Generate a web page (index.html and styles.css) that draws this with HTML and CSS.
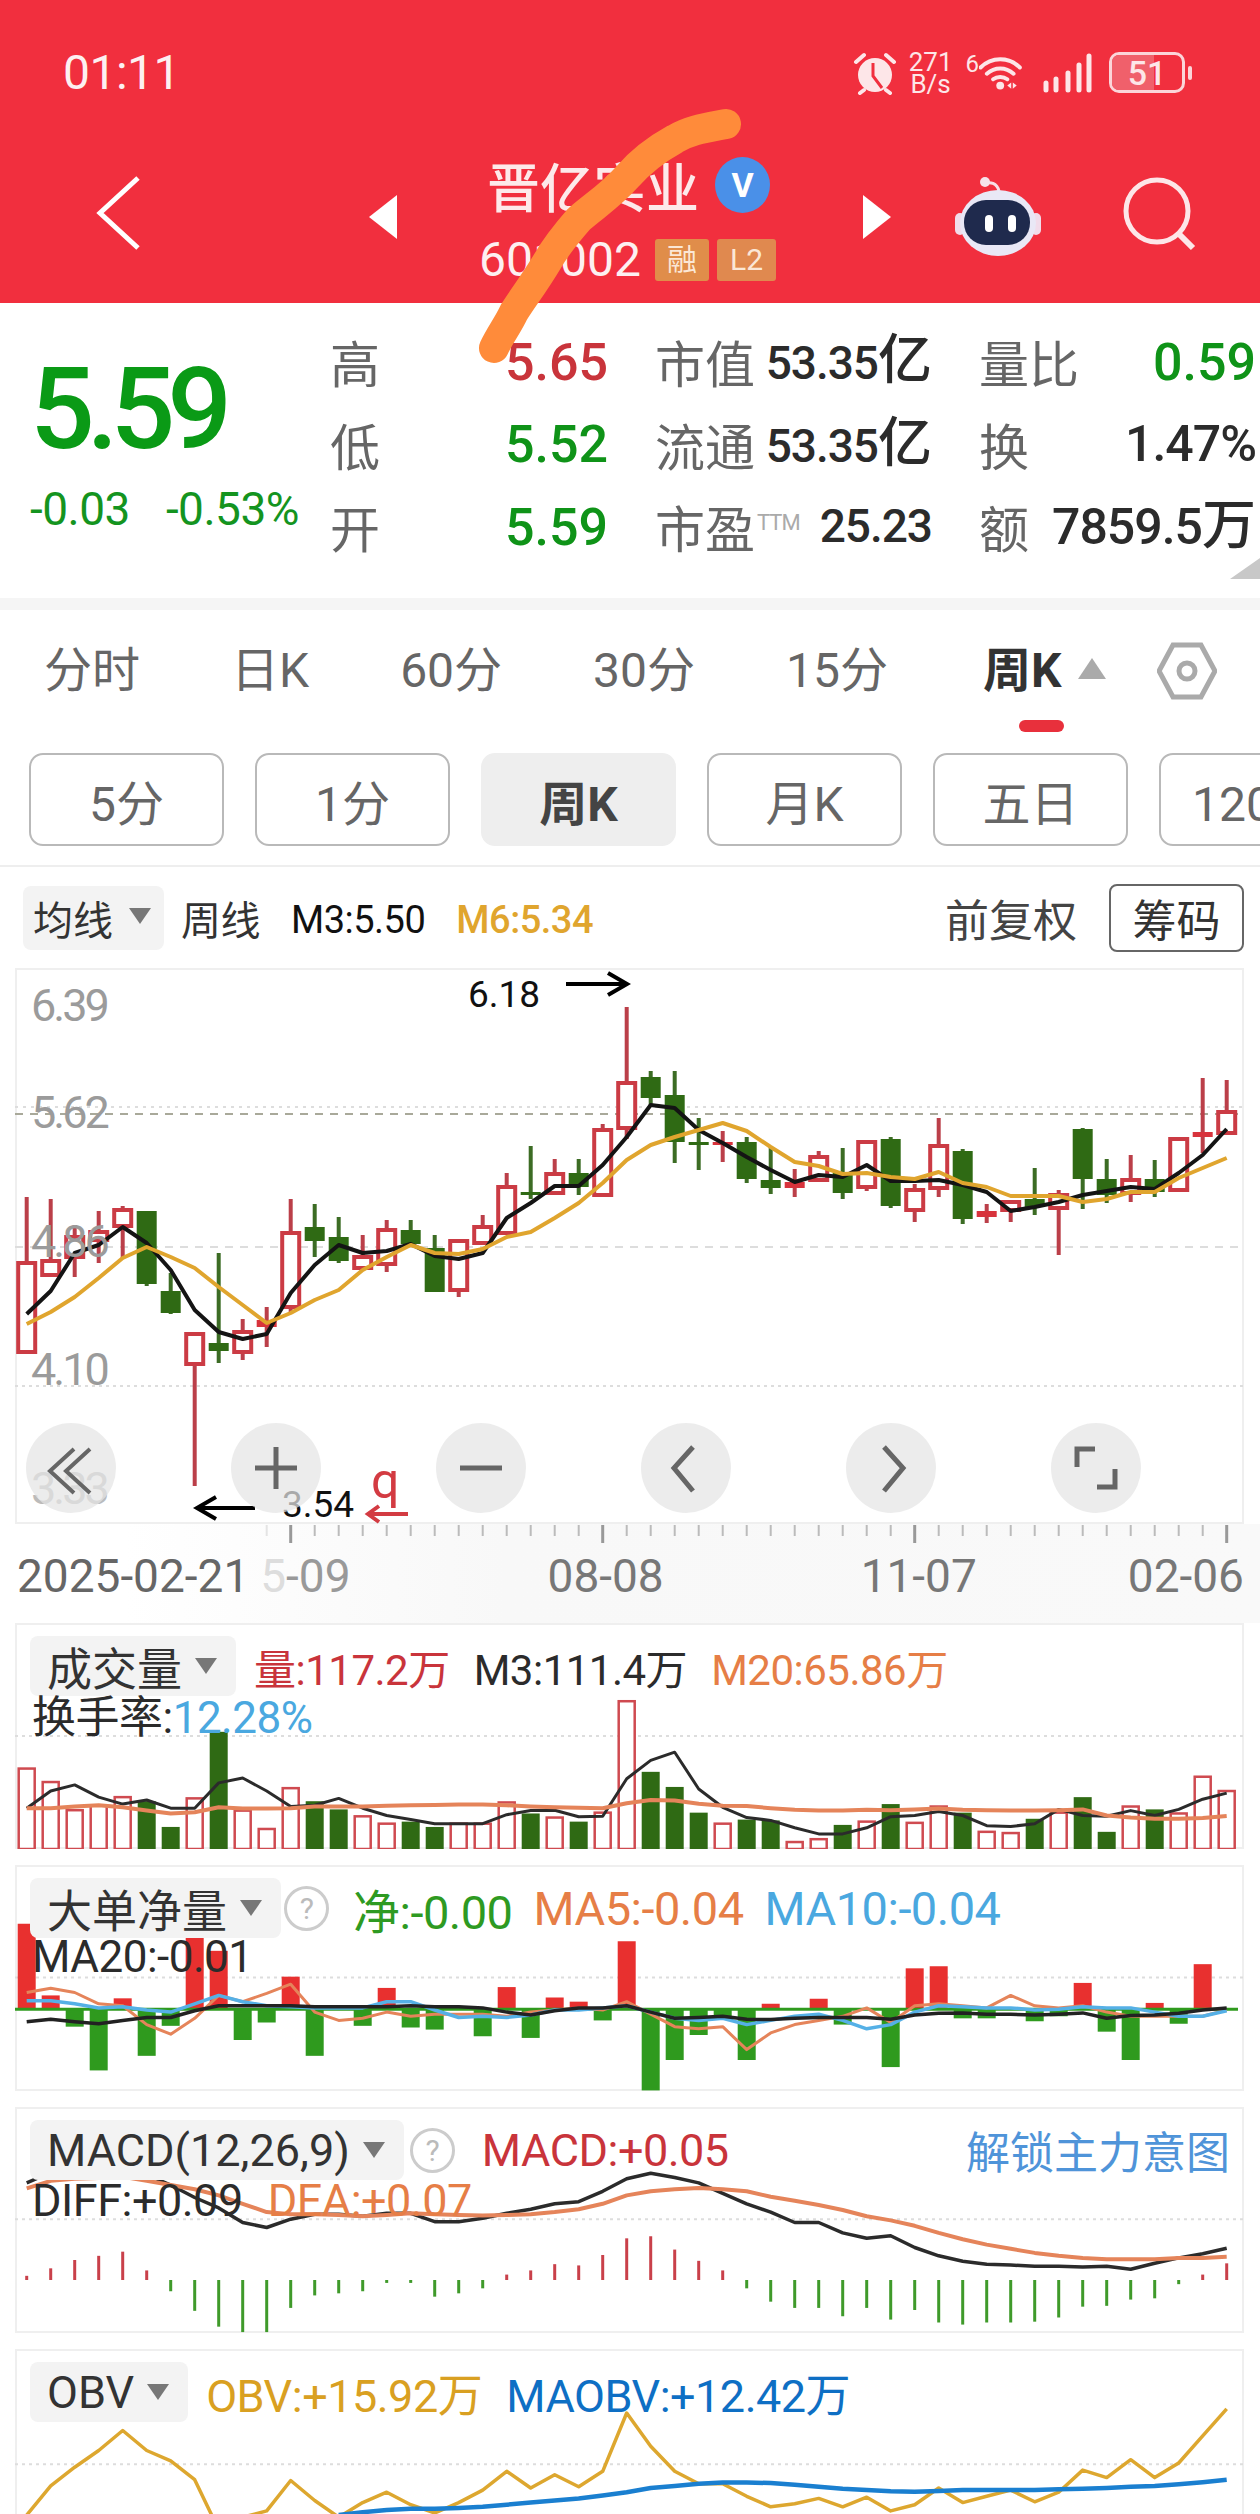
FILE: index.html
```html
<!DOCTYPE html>
<html lang="zh">
<head>
<meta charset="utf-8">
<title>晋亿实业</title>
<link rel="stylesheet" href="styles.css">
<script src="chart.js" defer></script>
</head>
<body>
<div class="page">
  <header class="top">
    <div class="status">
      <span class="clock">01:11</span>
      <div class="status-icons">
        <svg class="ic-alarm" viewBox="0 0 44 44"><path d="M3 11 11 4M41 11 33 4M11 39l-4 3M33 39l4 3" fill="none" stroke="#fde6e8" stroke-width="4" stroke-linecap="round"/><circle cx="22" cy="24" r="17" fill="#fde6e8"/><path d="M20 12v13l9 12" fill="none" stroke="#f12f3e" stroke-width="3"/></svg>
        <div class="netspeed"><span>271</span><span>B/s</span></div>
        <div class="wifi"><span class="wifi-six">6</span><svg class="ic-wifi" viewBox="0 0 56 42"><path d="M2 14C16 0 38 0 52 14M10 22c10-9 24-9 34 0M18 29c5-4 13-4 18 0" fill="none" stroke="#fde6e8" stroke-width="5" stroke-linecap="round"/><circle cx="27" cy="37" r="5" fill="#fde6e8"/><path d="M36 37l5-4v8zM43 33l5 4-5 4z" fill="#fde6e8"/></svg></div>
        <svg class="ic-signal" viewBox="0 0 50 40"><g fill="none" stroke="#fde6e8" stroke-width="5" stroke-linecap="round"><path d="M3 30v7M13 26v11M25 20v17M36 12v25M46 3v34"/></g></svg>
        <div class="battery"><span class="battery-fill"></span><span class="battery-num">51</span></div>
        <span class="battery-nub"></span>
      </div>
    </div>
    <div class="nav">
      <svg class="ic-back" viewBox="0 0 46 76"><path d="M42 3 4 38l38 35" fill="none" stroke="#fff" stroke-width="5"/></svg>
      <span class="tri tri-left"></span>
      <div class="nav-title">
        <div class="title-row"><span class="title">晋亿实业</span><span class="badge-v">V</span></div>
        <div class="code-row"><span class="code">601002</span><span class="mini">融</span><span class="mini mini-l2">L2</span></div>
      </div>
      <span class="tri tri-right"></span>
      <svg class="ic-robot" viewBox="0 0 88 80"><path d="M30 7c6-3 13-1 15 7" fill="none" stroke="#f8dfe6" stroke-width="3"/><circle cx="31" cy="5" r="5" fill="#f6e3ea"/><rect x="1" y="36" width="10" height="22" rx="5" fill="#f1dcea"/><rect x="77" y="36" width="10" height="22" rx="5" fill="#f1dcea"/><ellipse cx="44" cy="46" rx="38" ry="33" fill="#e9e8f6"/><rect x="10" y="23" width="66" height="45" rx="22" fill="#1f2a4d"/><rect x="31" y="38" width="8" height="17" rx="4" fill="#fff"/><rect x="54" y="38" width="8" height="17" rx="4" fill="#fff"/></svg>
      <svg class="ic-search" viewBox="0 0 74 74"><circle cx="34" cy="34" r="31" fill="none" stroke="#fde6e8" stroke-width="5"/><path d="M55 56l15 15" stroke="#fde6e8" stroke-width="6"/></svg>
    </div>
  </header>

  <section class="quote">
    <div class="price">
      <div class="price-main">5.59</div>
      <div class="price-sub"><span>-0.03</span><span>-0.53%</span></div>
    </div>
    <div class="stats">
      <div class="stat"><span class="lab">高</span><span class="val up">5.65</span></div>
      <div class="stat"><span class="lab">市值</span><span class="amt">53.35<i class="unit">亿</i></span></div>
      <div class="stat"><span class="lab">量比</span><span class="val down">0.59</span></div>
      <div class="stat"><span class="lab">低</span><span class="val down">5.52</span></div>
      <div class="stat"><span class="lab">流通</span><span class="amt">53.35<i class="unit">亿</i></span></div>
      <div class="stat"><span class="lab">换</span><span class="amt amt-lg">1.47%</span></div>
      <div class="stat"><span class="lab">开</span><span class="val down">5.59</span></div>
      <div class="stat"><span class="lab">市盈<sup class="ttm">TTM</sup></span><span class="amt">25.23</span></div>
      <div class="stat"><span class="lab">额</span><span class="amt amt-lg">7859.5<i class="unit">万</i></span></div>
    </div>
    <span class="corner"></span>
  </section>

  <div class="band"></div>

  <nav class="tabs">
    <span class="tab">分时</span>
    <span class="tab">日K</span>
    <span class="tab">60分</span>
    <span class="tab">30分</span>
    <span class="tab">15分</span>
    <span class="tab tab-on">周K<i class="tab-arrow"></i></span>
    <svg class="ic-hex" viewBox="0 0 60 58"><path d="M2 29 16 3h28l14 26-14 26H16z" fill="none" stroke="#aaa" stroke-width="5"/><circle cx="30" cy="29" r="8" fill="none" stroke="#aaa" stroke-width="5"/></svg>
  </nav>

  <div class="subtabs">
    <span class="sub">5分</span>
    <span class="sub">1分</span>
    <span class="sub sub-on">周K</span>
    <span class="sub">月K</span>
    <span class="sub">五日</span>
    <span class="sub">120分</span>
  </div>

  <div class="indbar">
    <span class="chip chip-ma">均线<i class="caret"></i></span>
    <span class="ind-txt cjk">周线</span>
    <span class="ind-txt black">M3:5.50</span>
    <span class="ind-txt gold">M6:5.34</span>
    <span class="fq">前复权</span>
    <span class="chouma">筹码</span>
  </div>

  <section class="chart-main">
    <svg id="kline" class="plot" viewBox="15 968 1229 556"></svg>
    <span class="ylab y1">6.39</span>
    <span class="ylab y2">5.62</span>
    <span class="ylab y3">4.86</span>
    <span class="ylab y4">4.10</span>
    <span class="ylab y5">3.33</span>
    <span class="note note-hi">6.18</span>
    <span class="note note-lo">3.54</span>
    <span class="note-q">q</span>
    <svg class="marks" viewBox="15 968 1229 556"><path d="M566 984h60M608 973l19 11-19 11M255 1508h-58M216 1497l-19 11 19 11" fill="none" stroke="#000" stroke-width="4"/><path d="M408 1514h-40M379 1506l-11 8 11 8" fill="none" stroke="#d33b42" stroke-width="4"/></svg>
    <div class="ctrls">
      <span class="ctrl"><svg viewBox="0 0 90 90"><path d="M48 26 24 48l24 22M64 26 40 48l24 22" fill="none" stroke="#666" stroke-width="4"/></svg></span>
      <span class="ctrl"><svg viewBox="0 0 90 90"><path d="M45 24v42M24 45h42" fill="none" stroke="#666" stroke-width="5"/></svg></span>
      <span class="ctrl"><svg viewBox="0 0 90 90"><path d="M24 45h42" fill="none" stroke="#666" stroke-width="5"/></svg></span>
      <span class="ctrl"><svg viewBox="0 0 90 90"><path d="M52 24 33 45l19 23" fill="none" stroke="#666" stroke-width="5"/></svg></span>
      <span class="ctrl"><svg viewBox="0 0 90 90"><path d="M38 24l19 21-19 23" fill="none" stroke="#666" stroke-width="5"/></svg></span>
      <span class="ctrl"><svg viewBox="0 0 90 90"><path d="M26 44V26h18M64 46v18H46" fill="none" stroke="#666" stroke-width="5"/></svg></span>
    </div>
  </section>

  <div class="axis">
    <svg id="ticks" class="ticks" viewBox="0 0 1260 24"></svg>
    <div class="dates">
      <span class="d1">2025-02-21</span>
      <span class="d2"><b class="ghost">5</b>-09</span>
      <span class="d3">08-08</span>
      <span class="d4">11-07</span>
      <span class="d5">02-06</span>
    </div>
  </div>

  <section class="panel">
    <svg id="vol" class="plot" viewBox="15 1623 1229 226"></svg>
    <div class="row">
      <span class="chip">成交量<i class="caret"></i></span>
      <span class="r-up">量:117.2万</span>
      <span class="r-dark">M3:111.4万</span>
      <span class="r-or">M20:65.86万</span>
    </div>
    <div class="row2"><span class="r-dark">换手率:</span><span class="r-sky">12.28%</span></div>
  </section>

  <section class="panel">
    <svg id="big" class="plot" viewBox="15 1865 1229 226"></svg>
    <div class="row row-wide">
      <span class="chip">大单净量<i class="caret"></i></span>
      <span class="help">?</span>
      <span class="r-grn">净:-0.00</span>
      <span class="r-or">MA5:-0.04</span>
      <span class="r-sky">MA10:-0.04</span>
    </div>
    <div class="row2 row2-up"><span class="r-dark">MA20:-0.01</span></div>
  </section>

  <section class="panel">
    <svg id="macd" class="plot" viewBox="15 2107 1229 226"></svg>
    <div class="row row-mid">
      <span class="chip">MACD(12,26,9)<i class="caret"></i></span>
      <span class="help">?</span>
      <span class="r-up">MACD:+0.05</span>
      <span class="unlock">解锁主力意图</span>
    </div>
    <div class="row2 row2-macd"><span class="r-dark">DIFF:+0.09</span><span class="r-or dea">DEA:+0.07</span></div>
  </section>

  <section class="panel panel-last">
    <svg id="obv" class="plot" viewBox="15 2348 1229 166"></svg>
    <div class="row row-mid">
      <span class="chip">OBV<i class="caret"></i></span>
      <span class="r-gold">OBV:+15.92万</span>
      <span class="r-blue">MAOBV:+12.42万</span>
    </div>
  </section>

  <svg class="scribble" viewBox="0 0 1260 400"><path d="M726 124C705 128 690 130 675 139C655 150 640 162 627 177C610 196 595 205 579 219C565 235 555 248 547 262C535 282 525 295 514 312C508 325 500 335 494 348" fill="none" stroke="#ff8b3a" stroke-width="30" stroke-linecap="round" stroke-linejoin="round"/></svg>
</div>
</body>
</html>
```

FILE: styles.css
```css
* { box-sizing: border-box; }
html, body { margin: 0; padding: 0; background: #fff; }
body { font-family: Roboto, "Noto Sans CJK SC", sans-serif; color: #333; }
.page { position: relative; width: 1260px; height: 2514px; overflow: hidden; }

/* header */
.top { height: 303px; background: #f12f3e; color: #fff; }
.status { display: flex; justify-content: space-between; align-items: center; height: 145px; padding: 0 68px 0 63px; }
.clock { font-size: 48px; line-height: 1; letter-spacing: -.5px; color: #fdf0f1; }
.status-icons { display: flex; align-items: center; gap: 0; }
.ic-alarm { width: 44px; height: 44px; margin-right: 12px; }
.netspeed { display: flex; flex-direction: column; align-items: center; font-size: 26px; line-height: 22px; color: #fde6e8; margin-right: 13px; }
.wifi { display: flex; align-items: flex-start; margin-right: 20px; }
.wifi-six { font-size: 24px; line-height: 22px; color: #fde6e8; }
.ic-wifi { width: 44px; height: 40px; }
.ic-signal { width: 50px; height: 40px; margin-right: 16px; }
.battery { position: relative; width: 76px; height: 41px; border: 3px solid #fbd5d9; border-radius: 10px; overflow: hidden; display: flex; align-items: center; justify-content: center; }
.battery-fill { position: absolute; left: 0; top: 0; bottom: 0; width: 60%; background: #f0606b; }
.battery-num { position: relative; font-size: 34px; font-weight: 500; line-height: 1; color: #fde6e8; }
.battery-nub { width: 4px; height: 14px; background: #fbd5d9; border-radius: 2px; margin-left: 3px; }

.nav { position: relative; display: flex; align-items: center; height: 158px; padding-left: 96px; padding-bottom: 14px; }
.ic-back { width: 46px; height: 76px; margin-top: -8px; margin-right: 227px; flex: none; }
.tri { flex: none; width: 0; height: 0; border-top: 22px solid transparent; border-bottom: 22px solid transparent; }
.tri-left { border-right: 28px solid #fff; margin-right: 90px; }
.tri-right { border-left: 28px solid #fff; margin-right: 67px; }
.nav-title { width: 376px; flex: none; margin-top: 4px; }
.title-row { display: flex; align-items: center; }
.title { font: 500 53px/56px "Noto Sans CJK SC", sans-serif; color: #fde9ea; }
.badge-v { width: 55px; height: 56px; border-radius: 50%; margin-left: 16px; background: #4a90e8; color: #fff; font-size: 34px; font-weight: 700; line-height: 56px; text-align: center; }
.code-row { display: flex; align-items: center; margin-top: 26px; margin-left: -8px; }
.code { font-size: 48px; line-height: 42px; color: #fdf0f1; width: 176px; }
.mini { width: 54px; height: 42px; background: #e08d4a; color: #fbe7d6; border-radius: 3px; font-size: 30px; line-height: 42px; text-align: center; margin-right: 8px; }
.mini-l2 { width: 59px; background: #e0894f; }
.ic-robot { width: 88px; height: 80px; flex: none; margin-right: 79px; margin-left: -4px; }
.ic-search { width: 74px; height: 74px; flex: none; margin-left: 2px; margin-top: -6px; }

/* quote */
.quote { position: relative; display: flex; height: 295px; }
.price { width: 330px; padding: 56px 0 0 30px; flex: none; }
.price-main { font-size: 114px; font-weight: 500; line-height: 100px; letter-spacing: -8px; color: #0a9a16; }
.price-sub { display: flex; gap: 36px; margin-top: 27px; font-size: 46px; line-height: 46px; letter-spacing: -.5px; color: #14941f; }
.stats { display: grid; grid-template-columns: 278px 277px 277px; grid-auto-rows: 82.5px; column-gap: 47px; padding-top: 17px; align-content: start; }
.stat { display: flex; justify-content: space-between; align-items: center; white-space: nowrap; }
.lab { font: 50px/1 "Noto Sans CJK SC", sans-serif; color: #666; }
.val { font-size: 52px; font-weight: 500; line-height: 1; margin-top: 3px; }
.up { color: #c9343b; }
.down { color: #0f9318; }
.amt { font-size: 46px; font-weight: 500; line-height: 1; letter-spacing: -1px; color: #2b2b2b; }
.amt-lg { font-size: 50px; }
.unit { font-style: normal; font-size: 54px; letter-spacing: 0; }
.ttm { font-size: 22px; line-height: 1; font-family: Roboto, sans-serif; letter-spacing: -1px; color: #aaa; vertical-align: 18px; margin-left: 2px; }
.corner { position: absolute; right: 0; top: 255px; border-left: 30px solid transparent; border-bottom: 21px solid #c8c8c8; }
.band { height: 12px; background: #f5f5f5; }

/* tabs */
.tabs { position: relative; display: flex; align-items: center; gap: 91px; height: 143px; padding: 0 0 22px 44px; }
.tab { position: relative; font-size: 48px; line-height: 1; color: #666; white-space: nowrap; }
.tab-on { font-weight: 700; color: #333; left: 4px; }
.tab-on::after { content: ""; position: absolute; left: 36px; top: 73px; width: 45px; height: 12px; border-radius: 6px; background: #e8303c; }
.tab-arrow { position: absolute; left: 95px; top: 11px; border-left: 14px solid transparent; border-right: 14px solid transparent; border-bottom: 21px solid #aaa; }
.ic-hex { position: absolute; left: 1157px; top: 32px; width: 60px; height: 58px; }
.subtabs { display: flex; gap: 31px; height: 114px; padding-left: 29px; border-bottom: 2px solid #eee; overflow: hidden; }
.sub { flex: none; width: 195px; height: 93px; border: 2px solid #b9b9b9; border-radius: 14px; display: flex; align-items: center; justify-content: center; font-size: 48px; color: #666; white-space: nowrap; }
.sub-on { border-color: #eee; background: #eee; font-weight: 700; color: #444; }

.indbar { display: flex; align-items: center; height: 101px; padding: 0 16px 0 23px; white-space: nowrap; }
.chip { position: relative; display: inline-flex; align-items: center; height: 60px; padding: 0 54px 0 17px; background: #f3f3f3; border-radius: 8px; font-size: 44px; color: #333; }
.chip-ma { height: 64px; width: 141px; padding: 0 0 0 10px; font-size: 40px; }
.caret { position: absolute; right: 19px; top: 22px; border-left: 11px solid transparent; border-right: 11px solid transparent; border-top: 16px solid #777; }
.chip-ma .caret { right: 13px; }
.ind-txt { font-size: 38px; letter-spacing: -.5px; margin: 5px 0 0 31px; }
.cjk { font-size: 40px; margin: 0 0 0 17px; color: #333; }
.black { color: #111; }
.gold { color: #e0a52e; font-weight: 500; }
.fq { margin-left: auto; font-size: 44px; color: #444; }
.chouma { display: flex; align-items: center; justify-content: center; width: 135px; height: 68px; margin-left: 32px; border: 2px solid #666; border-radius: 8px; font-size: 44px; color: #333; }

/* charts */
.chart-main { position: relative; height: 556px; margin: 0 16px 0 15px; box-shadow: inset 0 0 0 2px #efefef; }
.plot { position: absolute; left: 0; top: 0; width: 100%; height: 100%; }
.marks { position: absolute; left: 0; top: 0; width: 100%; height: 100%; }
.ylab { position: absolute; left: 16px; font-size: 45px; letter-spacing: -3px; line-height: 40px; color: #9b9b9b; }
.y1 { top: 18px; }
.y2 { top: 125px; }
.y3 { top: 254px; }
.y4 { top: 382px; }
.y5 { top: 501px; color: #bbb; }
.note { position: absolute; font-size: 37px; line-height: 1; color: #111; }
.note-hi { left: 453px; top: 8px; }
.note-lo { left: 267px; top: 518px; }
.note-q { position: absolute; left: 356px; top: 488px; font-size: 50px; line-height: 1; color: #d33b42; }
.ctrls { position: absolute; left: 11px; top: 455px; display: flex; gap: 115px; }
.ctrl { width: 90px; height: 90px; border-radius: 50%; background: rgba(228,228,228,.72); }
.ctrl svg { display: block; width: 90px; height: 90px; }

.axis { position: relative; height: 99px; background: linear-gradient(90deg, #fff 10%, #f8f8f8 40%, #f9f9f9 100%); }
.ticks { display: block; width: 1260px; height: 24px; }
.dates { display: flex; padding-left: 17px; margin-top: 6px; font-size: 46px; line-height: 44px; color: #666; white-space: nowrap; }
.d2 { margin-left: 11px; color: #999; }
.d3 { margin-left: 197px; color: #777; }
.d4 { margin-left: 197px; color: #777; }
.d5 { margin-left: 151px; color: #777; }
.ghost { font-weight: 400; color: #ddd; }

.panel { position: relative; height: 226px; margin: 0 16px 16px 15px; box-shadow: inset 0 0 0 2px #efefef; overflow: hidden; white-space: nowrap; }
.panel-last { height: 170px; margin-bottom: 0; }
.row { position: relative; top: 13px; display: flex; align-items: center; gap: 24px; height: 60px; padding: 0 14px 0 15px; font-size: 42px; letter-spacing: -.5px; }
.row-wide { font-size: 47px; gap: 21px; }
.row-mid { font-size: 45px; }
.row .chip { margin-right: -6px; letter-spacing: 0; font-size: 45px; }
.row2 { position: relative; top: 15px; display: flex; height: 40px; padding-left: 17px; font-size: 44px; line-height: 40px; letter-spacing: -.5px; }
.row2-up { top: 12px; }
.row2-macd { font-size: 45px; top: 14px; }
.help { width: 45px; height: 45px; margin-left: -12px; margin-right: 3px; border: 3px solid #ccc; border-radius: 50%; font-size: 30px; line-height: 39px; text-align: center; color: #bbb; }
.r-up { color: #c9343b; }
.r-dark { color: #2b2b2b; }
.r-or { color: #e67e46; }
.r-sky { color: #4aa8e0; }
.r-grn { color: #2e9a22; }
.r-gold { color: #d9a021; }
.r-blue { color: #0e6fc4; }
.dea { margin-left: 25px; }
.unlock { margin-left: auto; font: 44px/1 "Noto Sans CJK SC", sans-serif; letter-spacing: 0; color: #4f94d9; }
.scribble { position: absolute; left: 0; top: 0; width: 1260px; height: 400px; }
```

FILE: chart.js
```js
const NS = 'http://www.w3.org/2000/svg';
const X = i => 26.7 + 24 * i;
const RED = '#cb3b44', WICKR = '#bb3f49', GRN = '#2f6a14', WICKG = '#3c6c24';

function el(parent, tag, attrs) {
  const n = document.createElementNS(NS, tag);
  for (const k in attrs) n.setAttribute(k, attrs[k]);
  parent.appendChild(n);
  return n;
}
function line(svg, ys, conv, color, w, start) {
  const s = start || 0;
  const pts = ys.map((v, i) => X(i + s).toFixed(1) + ',' + conv(v).toFixed(1)).join(' ');
  el(svg, 'polyline', { points: pts, fill: 'none', stroke: color, 'stroke-width': w, 'stroke-linejoin': 'round' });
}
function grid(svg, y, color, dash, w) {
  el(svg, 'path', { d: `M15 ${y}H1244`, stroke: color, 'stroke-dasharray': dash, 'stroke-width': w || 2, fill: 'none' });
}

/* weekly K: high, bodyTop, bodyBottom, low, r|g */
const candles = [
[1197,1263,1352,1352,'r'],[1199,1261,1275,1275,'r'],[1225,1237,1257,1277,'r'],[1211,1232,1240,1263,'r'],[1206,1210,1226,1258,'r'],
[1211,1211,1284,1286,'g'],[1273,1291,1313,1314,'g'],[1334,1334,1364,1486,'r'],[1253,1343,1351,1363,'g'],[1319,1332,1352,1360,'r'],
[1307,1320,1327,1347,'r'],[1199,1233,1307,1313,'r'],[1204,1227,1241,1257,'g'],[1217,1237,1261,1263,'g'],[1235,1257,1268,1270,'r'],
[1220,1230,1264,1272,'r'],[1220,1230,1244,1246,'g'],[1235,1248,1292,1292,'g'],[1239,1241,1290,1297,'r'],[1215,1227,1243,1244,'r'],
[1173,1187,1233,1234,'r'],[1146,1192,1194,1199,'g'],[1159,1174,1193,1194,'r'],[1159,1173,1187,1195,'g'],[1124,1130,1195,1196,'r'],
[1007,1083,1128,1139,'r'],[1071,1077,1098,1105,'g'],[1071,1095,1142,1163,'g'],[1118,1142,1144,1170,'g'],[1131,1142,1145,1162,'r'],
[1137,1142,1179,1183,'g'],[1146,1180,1188,1194,'g'],[1169,1182,1188,1197,'r'],[1151,1157,1180,1181,'r'],[1148,1173,1193,1199,'g'],
[1140,1142,1187,1191,'r'],[1137,1139,1206,1208,'g'],[1184,1190,1210,1222,'r'],[1118,1146,1188,1197,'r'],[1149,1151,1219,1224,'g'],
[1204,1211,1217,1223,'r'],[1202,1202,1210,1222,'r'],[1168,1199,1207,1215,'g'],[1190,1195,1208,1255,'r'],[1128,1129,1179,1209,'g'],
[1159,1179,1195,1203,'g'],[1155,1180,1193,1202,'r'],[1160,1179,1192,1197,'g'],[1139,1139,1190,1191,'r'],[1078,1132,1137,1153,'r'],
[1080,1112,1133,1134,'r']];
const ma3 = [1314,1291,1253,1245,1227,1243,1270,1310,1332,1339,1334,1293,1265,1245,1253,1251,1244,1256,1259,1253,1218,1203,1186,1186,1165,1137,1105,1108,1130,1143,1157,1170,1182,1175,1177,1165,1181,1181,1180,1185,1192,1211,1207,1202,1195,1191,1187,1189,1173,1155,1129];
const ma6 = [1324,1312,1297,1278,1258,1247,1257,1268,1287,1305,1323,1313,1300,1290,1270,1257,1245,1253,1254,1249,1237,1232,1218,1203,1183,1160,1145,1137,1130,1123,1131,1147,1162,1166,1174,1173,1177,1179,1172,1183,1187,1196,1196,1196,1202,1199,1192,1192,1178,1168,1158];

const kl = document.getElementById('kline');
grid(kl, 1107, '#ddd', '3 5');
grid(kl, 1114, '#a9a99a', '8 7');
grid(kl, 1247, '#ddd', '8 7');
grid(kl, 1386, '#ddd', '3 4');
candles.forEach((c, i) => {
  const x = X(i), red = c[4] === 'r';
  el(kl, 'path', { d: `M${x} ${c[0]}V${c[3]}`, stroke: red ? WICKR : WICKG, 'stroke-width': 4 });
  const h = c[2] - c[1];
  if (red && h >= 8) el(kl, 'rect', { x: x - 8.5, y: c[1], width: 17, height: h, fill: '#fff', stroke: RED, 'stroke-width': 4 });
  else el(kl, 'rect', { x: x - 10, y: c[1], width: 20, height: Math.max(h, 3), fill: red ? '#d8333c' : GRN });
});
line(kl, ma3, v => v, '#141414', 4);
line(kl, ma6, v => v, '#e0a52e', 4);

/* time axis */
const tk = document.getElementById('ticks');
for (let i = 10; i <= 50; i++) {
  const major = (i - 11) % 13 === 0;
  el(tk, 'path', { d: `M${X(i)} 1V${major ? 19 : 12}`, stroke: i === 10 ? '#e4e4e4' : major ? '#999' : '#bbb', 'stroke-width': major ? 3 : 2 });
}

/* volume */
const vy = z => 1240 + z / 2.45;
const vol = [1295,1328,1397,1385,1365,1375,1438,1368,1205,1398,1443,1343,1375,1395,1412,1430,1425,1438,1430,1430,1378,1405,1415,1425,1403,1130,1303,1340,1403,1430,1420,1422,1475,1468,1433,1425,1382,1428,1388,1403,1450,1453,1418,1403,1365,1450,1388,1395,1405,1315,1350];
const vblack = [1392,1350,1335,1365,1382,1372,1392,1392,1330,1318,1350,1388,1385,1368,1392,1410,1420,1430,1430,1430,1408,1398,1397,1413,1412,1320,1275,1255,1345,1390,1415,1422,1440,1455,1455,1440,1413,1410,1400,1410,1435,1437,1430,1395,1410,1412,1398,1410,1395,1370,1355];
const vor = [1392,1392,1388,1385,1390,1398,1405,1402,1390,1393,1393,1392,1388,1388,1388,1386,1385,1384,1383,1383,1385,1388,1390,1391,1392,1380,1372,1373,1381,1386,1387,1392,1396,1398,1398,1396,1397,1395,1393,1396,1397,1398,1398,1397,1395,1410,1415,1418,1418,1416,1411];
const v = document.getElementById('vol');
grid(v, 1736, '#ddd', '3 4');
vol.forEach((z, i) => {
  const t = vy(z), b = 1850, x = X(i);
  if (candles[i][4] === 'r') el(v, 'rect', { x: x - 8, y: t, width: 16, height: b - t - 1, fill: '#fff', stroke: '#cf4a50', 'stroke-width': 2.5 });
  else el(v, 'rect', { x: x - 9, y: t, width: 18, height: b - t, fill: GRN });
});
line(v, vblack, vy, '#2b2b2b', 3);
line(v, vor, vy, '#e5845a', 4);

/* big order net volume: z coordinates, 358 = zero */
const gy = z => 1860 + z / 2.4;
const bars = {0:153,1:325,2:400,3:505,4:332,5:470,6:398,7:180,8:218,9:432,10:390,11:280,12:470,14:398,15:307,16:402,17:407,19:423,20:305,21:427,22:330,23:340,24:385,25:195,26:553,27:480,28:420,29:380,30:480,31:345,33:333,34:395,36:497,37:260,38:255,39:380,40:380,42:387,43:375,44:295,45:412,46:480,47:343,48:393,49:250};
const bor = [318,308,318,345,350,395,418,380,325,340,320,298,365,385,380,365,375,370,370,370,375,365,360,355,360,340,370,400,405,400,455,415,395,385,375,355,390,350,345,350,355,325,350,355,350,365,375,375,375,375,360];
const bbl = [338,338,345,355,352,360,365,345,325,340,350,352,355,355,355,340,340,360,378,375,378,372,360,360,355,350,365,380,385,380,395,385,375,370,385,405,395,365,350,352,355,355,360,358,352,355,355,365,375,375,362];
const bbk = [388,382,388,393,385,378,378,362,350,350,350,350,352,352,352,352,350,352,352,355,365,372,362,355,355,350,365,380,378,375,382,383,380,378,378,378,382,372,368,367,370,370,372,370,367,380,373,372,368,360,355];
const b = document.getElementById('big');
grid(b, gy(282), '#ddd', '3 4');
for (const k in bars) {
  const z = bars[k], x = X(+k);
  const up = z < 358, y0 = gy(358), y1 = gy(z);
  el(b, 'rect', { x: x - 9, y: Math.min(y0, y1), width: 18, height: Math.abs(y1 - y0), fill: up ? '#e8302f' : '#2f9a1e' });
}
el(b, 'path', { d: `M15 ${gy(358)}H1238`, stroke: '#2f9a1e', 'stroke-width': 3 });
line(b, bor, gy, '#e5845a', 3);
line(b, bbl, gy, '#55b0e6', 3.5);
line(b, bbk, gy, '#222', 3.5);

/* MACD: z coordinates, 1008 = zero */
const hist = [998,980,960,950,940,985,1035,1082,1120,1133,1133,1075,1045,1040,1035,1015,1015,1048,1040,1028,995,985,970,973,948,908,903,935,962,985,1028,1060,1075,1075,1095,1075,1103,1080,1110,1115,1110,1110,1108,1098,1072,1070,1055,1052,1018,995,968];
const diff = [775,750,740,738,735,755,780,810,835,870,882,862,850,850,855,848,848,868,868,860,848,838,825,820,795,765,752,762,775,800,825,845,870,870,895,908,902,930,950,963,970,972,975,975,977,975,982,968,955,945,932];
const dea = [788,770,765,763,760,770,780,790,805,825,845,850,850,852,855,852,848,850,852,853,852,850,845,838,825,805,795,790,787,790,795,808,818,828,840,855,865,878,895,910,923,933,943,950,955,958,958,958,955,955,952];
const m = document.getElementById('macd');
grid(m, gy(862), '#ddd', '3 4');
hist.forEach((z, i) => {
  el(m, 'path', { d: `M${X(i)} ${gy(1008)}V${gy(z)}`, stroke: z < 1008 ? '#c9404a' : '#3f9a2a', 'stroke-width': 3 });
});
line(m, diff, gy, '#2b2b2b', 3.5);
line(m, dea, gy, '#e5845a', 4);

/* OBV */
const obv = [1565,1495,1450,1410,1362,1410,1435,1480,1600,1570,1555,1482,1530,1570,1535,1510,1540,1560,1535,1505,1460,1500,1468,1497,1460,1320,1400,1460,1490,1490,1520,1545,1538,1525,1545,1522,1555,1540,1500,1535,1520,1505,1533,1510,1457,1475,1432,1475,1440,1375,1310];
const maobv = [1565,1558,1553,1550,1550,1548,1545,1540,1535,1530,1525,1518,1510,1500,1495,1490,1487,1487,1488,1492,1497,1502,1505,1508,1509,1507,1505,1505,1505,1505,1503,1502,1500,1497,1495,1491,1486,1480];
const o = document.getElementById('obv');
grid(o, gy(1443), '#ddd', '3 4');
line(o, obv, gy, '#dda72f', 3.5);
line(o, maobv, gy, '#1a7fd0', 4.5, 13);
```
